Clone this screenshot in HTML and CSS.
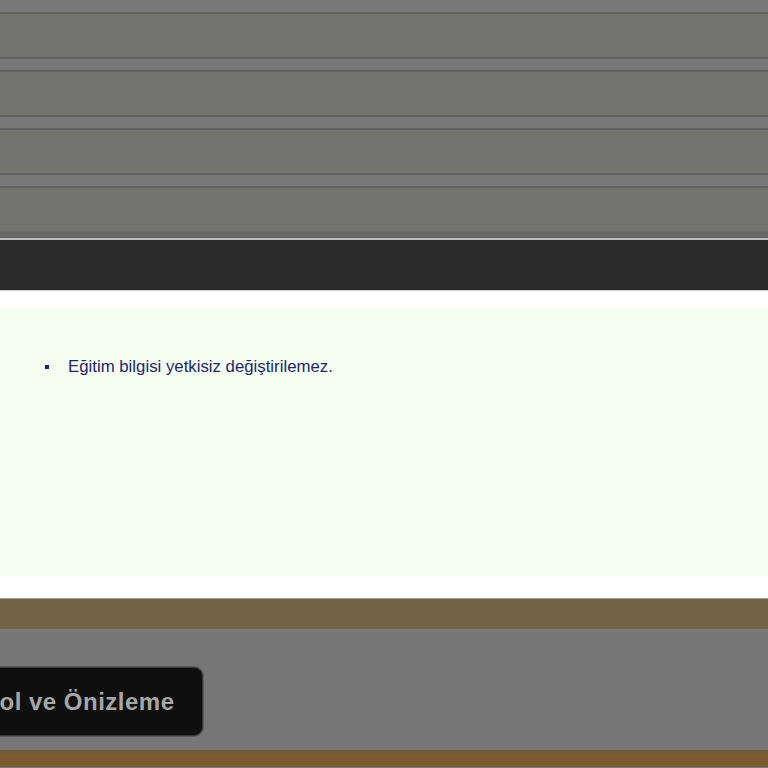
FILE: index.html
```html
<!DOCTYPE html>
<html lang="tr">
<head>
<meta charset="utf-8">
<title>Eğitim</title>
<link rel="stylesheet" href="styles.css">
</head>
<body>
<div class="rows">
  <div class="gap first"></div>
  <div class="row"></div>
  <div class="gap"></div>
  <div class="row"></div>
  <div class="gap"></div>
  <div class="row"></div>
  <div class="gap"></div>
  <div class="row last"></div>
</div>
<div class="bar"></div>
<div class="panel">
  <div class="notice">
    <ul class="msgs">
      <li>Eğitim bilgisi yetkisiz değiştirilemez.</li>
    </ul>
  </div>
</div>
<div class="brown"></div>
<div class="actions">
  <button class="btn" type="button">Kontrol ve Önizleme</button>
</div>
<div class="foot"></div>
</body>
</html>
```
FILE: styles.css
```css
html, body {
  margin: 0;
  padding: 0;
  background: #777777;
  overflow: hidden;
}
body {
  font-family: "Liberation Sans", Arial, sans-serif;
  height: 768px;
}
.rows {
  display: flex;
  flex-direction: column;
  background: #777777;
}
.gap {
  height: 11px;
  background: #787878;
  border-bottom: 2px solid #616161;
}
.gap.first {
  height: 12px;
}
.row {
  height: 43px;
  background: #73736f;
  border-bottom: 2px solid #616161;
}
.row.last {
  height: 50px;
  border-bottom: 0;
  background: linear-gradient(#73736f 0, #73736f 43px, #6a6a68 44px, #606060 46px, #6a6a6a 47px, #5f5f5f 50px);
}
.bar {
  height: 50px;
  background: #2a2a2a;
  border-top: 2px solid #bdbdbd;
  border-bottom: 1px solid #cfcfcf;
}
.panel {
  background: #ffffff;
  padding: 16px 0 22px;
}
.notice {
  background: #f4fff2;
  height: 269px;
  padding-top: 50px;
  box-sizing: border-box;
}
.msgs {
  margin: 0;
  padding: 0 0 0 68px;
  list-style: none;
  color: #24246e;
  font-size: 16.8px;
}
.msgs li {
  position: relative;
}
.msgs li::before {
  content: "";
  position: absolute;
  left: -23px;
  top: 8px;
  width: 4px;
  height: 4px;
  background: #1a1a80;
}
.brown {
  height: 30px;
  background: #736448;
  border-top: 1px solid #9e9a92;
}
.actions {
  height: 121px;
  background: #777777;
  display: flex;
  align-items: flex-start;
  padding-top: 37px;
  box-sizing: border-box;
  border-top: 1px solid #7c7a72;
}
.btn {
  margin-left: -98px;
  height: 69px;
  padding: 0 27px 0 30px;
  background: #0f0f0f;
  color: #a6a6a6;
  border: 1px solid #3a3a3a;
  border-radius: 9px;
  font-family: "Liberation Sans", Arial, sans-serif;
  font-weight: bold;
  font-size: 24px;
  letter-spacing: 0.5px;
  white-space: nowrap;
  flex-shrink: 0;
  box-shadow: 0 0 0 1px #5a5a5a;
}
.foot {
  height: 17px;
  background: linear-gradient(#6a5a3e, #7a5a2e 4px, #7a5a2e);
}
```
